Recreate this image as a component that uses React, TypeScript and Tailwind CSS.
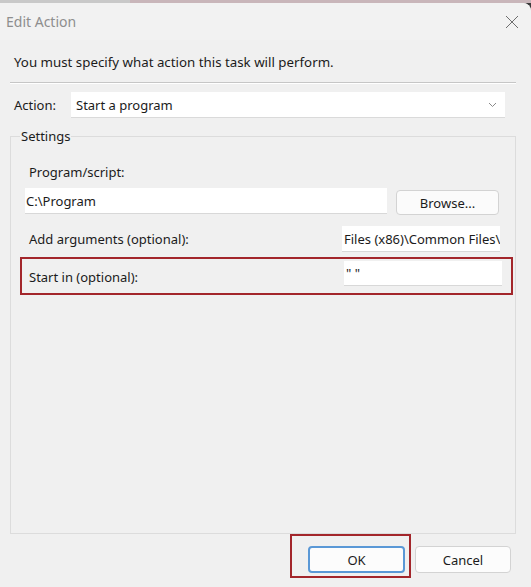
import React from "react";

const font = { fontFamily: '"Segoe UI", "Noto Sans", "Open Sans", sans-serif' };

export default function App() {
  return (
    <div className="w-[531px] h-[587px] bg-[#3a3a3a] overflow-hidden text-[#1b1b1b] text-[13px]" style={font}>
      <div className="flex h-[3px]">
        <div className="w-[130px] bg-[#c9c9c9]" />
        <div className="flex-1 bg-[#c9b6ba]" />
      </div>
      <div className="h-[584px] bg-[#f0f0f0] rounded-tr-[8px] flex flex-col">
        <div className="h-[37px] flex items-center justify-between pl-[6px] pr-[12px] bg-[#f2f2f2] rounded-tr-[8px]">
          <span className="text-[14px] text-[#8e8e8e] leading-5">Edit Action</span>
          <svg width="14" height="14" viewBox="0 0 14 14" className="mt-[1px]">
            <path d="M1 1 L13 13 M13 1 L1 13" stroke="#6e6e6e" strokeWidth="1" fill="none" />
          </svg>
        </div>
        <div className="px-[10px] flex flex-col">
          <div className="mt-[12px] pl-[4px] leading-5 text-[13.3px]">You must specify what action this task will perform.</div>
          <div className="mt-[10px] w-[506px] border-t border-[#c6c6c6] border-b border-b-white" />
          <div className="mt-[8px] flex items-center">
            <span className="w-[61px] pl-[4px] leading-5">Action:</span>
            <div className="w-[434px] h-[26px] bg-white border-b border-[#dadada] flex items-center justify-between pl-[5px] pr-[8px]">
              <span className="leading-5">Start a program</span>
              <svg width="9" height="6" viewBox="0 0 9 6">
                <path d="M1 1 L4.5 4.5 L8 1" stroke="#8a8a8a" strokeWidth="1" fill="none" />
              </svg>
            </div>
          </div>
          <fieldset className="mt-[8px] w-[506px] h-[408px] border border-[#dcdcdc]">
            <legend className="ml-[9px] px-[1px] leading-5">Settings</legend>
            <div className="mt-[16px] pl-[18px] leading-5">Program/script:</div>
            <div className="mt-[6px] flex items-start">
              <div className="ml-[14px] w-[362px] h-[26px] bg-white border-b border-[#d8d8d8] flex items-center pl-[1px]">
                <span className="leading-5">C:\Program</span>
              </div>
              <button className="ml-[9px] mt-[2px] w-[103px] h-[25px] bg-[#fbfbfb] border border-[#d3d3d3] rounded-[4px] flex items-center justify-center leading-5">
                Browse...
              </button>
            </div>
            <div className="mt-[11px] flex items-center pr-[15px]">
              <span className="flex-1 pl-[18px] leading-5">Add arguments (optional):</span>
              <div className="w-[158px] h-[26px] bg-white border-b border-[#d8d8d8] overflow-hidden whitespace-nowrap flex items-center pl-[2px]">
                <span className="leading-5">Files (x86)\Common Files\</span>
              </div>
            </div>
            <div className="mt-[5px] ml-[9px] w-[493px] h-[38px] border-2 border-[#a3262b] flex items-start pt-[2px] pr-[9px]">
              <span className="flex-1 pl-[7px] leading-5 mt-[6px]">Start in (optional):</span>
              <div className="w-[158px] h-[25px] bg-white border-b border-[#d8d8d8] flex items-center pl-[2px]">
                <span className="leading-5">" "</span>
              </div>
            </div>
          </fieldset>
          <div className="flex items-start justify-end pr-[10px]">
            <div className="w-[121px] h-[44px] border-2 border-[#a3262b] pl-[16px] pt-[10px]">
              <button className="w-[97px] h-[27px] bg-[#fcfcfc] border-2 border-[#5a98d6] rounded-[4px] flex items-center justify-center leading-5">
                OK
              </button>
            </div>
            <button className="ml-[4px] mt-[12px] w-[96px] h-[27px] bg-[#fcfcfc] border border-[#d3d3d3] rounded-[4px] flex items-center justify-center leading-5">
              Cancel
            </button>
          </div>
        </div>
      </div>
    </div>
  );
}
